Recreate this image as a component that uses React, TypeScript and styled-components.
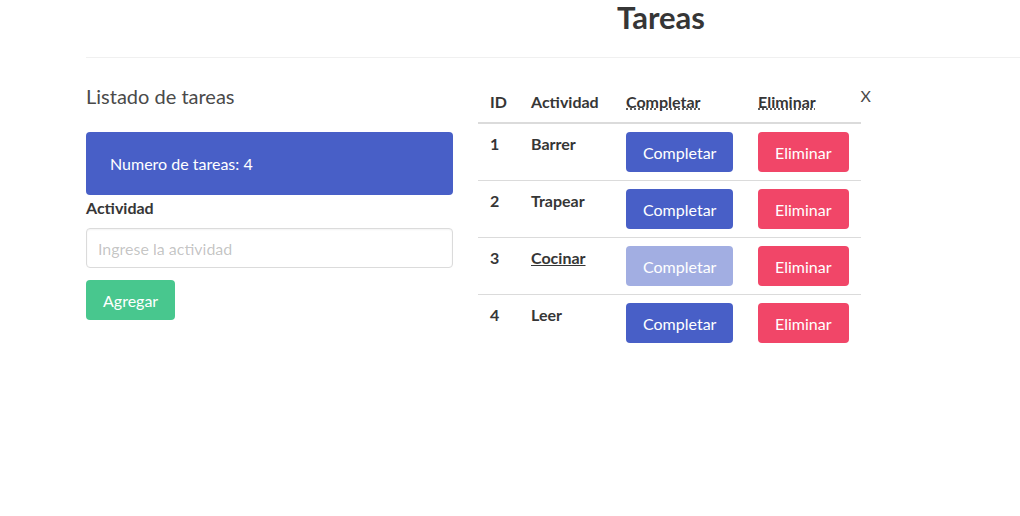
import React, { useState } from 'react';
import styled, { createGlobalStyle } from 'styled-components';

type Task = { id: number; name: string; done: boolean };

const initialTasks: Task[] = [
  { id: 1, name: 'Barrer', done: false },
  { id: 2, name: 'Trapear', done: false },
  { id: 3, name: 'Cocinar', done: true },
  { id: 4, name: 'Leer', done: false },
];

const App = () => {
  const [tasks, setTasks] = useState<Task[]>(initialTasks);
  const [activity, setActivity] = useState('');

  const addTask = () => {
    if (!activity.trim()) return;
    setTasks((prev) => [...prev, { id: prev.length + 1, name: activity, done: false }]);
    setActivity('');
  };

  const completeTask = (id: number) => {
    setTasks((prev) => prev.map((t) => (t.id === id ? { ...t, done: true } : t)));
  };

  const removeTask = (id: number) => {
    setTasks((prev) => prev.filter((t) => t.id !== id));
  };

  return (
    <>
      <GlobalStyle />
      <Header>
        <Title>Tareas</Title>
      </Header>
      <Columns>
        <LeftColumn>
          <Subtitle>Listado de tareas</Subtitle>
          <Notification>Numero de tareas: {tasks.length}</Notification>
          <Label>Actividad</Label>
          <Input
            placeholder="Ingrese la actividad"
            value={activity}
            onChange={(e) => setActivity(e.target.value)}
          />
          <Button $color="#48c78e" onClick={addTask}>
            Agregar
          </Button>
        </LeftColumn>
        <RightColumn>
          <Table>
            <thead>
              <tr>
                <Th $width={41}>ID</Th>
                <Th $width={95}>Actividad</Th>
                <Th $width={132}>
                  <abbr title="Completar">Completar</abbr>
                </Th>
                <Th $width={114}>
                  <abbr title="Eliminar">Eliminar</abbr>
                </Th>
              </tr>
            </thead>
            <tbody>
              {tasks.map((t) => (
                <tr key={t.id}>
                  <Td>{t.id}</Td>
                  <Td $done={t.done}>{t.name}</Td>
                  <Td>
                    <Button $color="#485fc7" disabled={t.done} onClick={() => completeTask(t.id)}>
                      Completar
                    </Button>
                  </Td>
                  <Td>
                    <Button $color="#f14668" onClick={() => removeTask(t.id)}>
                      Eliminar
                    </Button>
                  </Td>
                </tr>
              ))}
            </tbody>
          </Table>
          <Close>X</Close>
        </RightColumn>
      </Columns>
    </>
  );
};

export default App;

const GlobalStyle = createGlobalStyle`
  html, body {
    margin: 0;
    padding: 0;
    background: #fff;
  }
  body {
    font-family: Lato, "Open Sans", Arial, sans-serif;
    font-size: 16px;
    line-height: 1.5;
    color: #4a4a4a;
  }
  * {
    box-sizing: border-box;
  }
`;

const Header = styled.div`
  margin-left: 86px;
  border-bottom: 1px solid #f0f0f0;
  padding-bottom: 22px;
`;

const Title = styled.h1`
  margin: 0;
  padding-left: 216px;
  text-align: center;
  font-size: 31px;
  font-weight: 700;
  line-height: 35px;
  color: #363636;
`;

const Columns = styled.div`
  display: flex;
  padding: 24px 0 0 86px;
  gap: 25px;
`;

const LeftColumn = styled.div`
  width: 367px;
  display: flex;
  flex-direction: column;
  align-items: flex-start;
`;

const Subtitle = styled.h2`
  margin: 0 0 22px;
  font-size: 20px;
  font-weight: 400;
  line-height: 28px;
  color: #4a4a4a;
`;

const Notification = styled.div`
  width: 100%;
  background: #485fc7;
  color: #fff;
  border-radius: 4px;
  padding: 20px 24px 19px;
`;

const Label = styled.label`
  display: block;
  font-weight: 700;
  color: #363636;
  margin: 1px 0 8px;
`;

const Input = styled.input`
  width: 100%;
  height: 40px;
  padding: 0 11px;
  border: 1px solid #dbdbdb;
  border-radius: 4px;
  font: inherit;
  color: #363636;
  margin-bottom: 12px;
  box-shadow: inset 0 1px 2px rgba(10, 10, 10, 0.05);

  &::placeholder {
    color: rgba(54, 54, 54, 0.3);
  }
`;

const Button = styled.button<{ $color: string }>`
  height: 40px;
  padding: 0 16px;
  border: 1px solid transparent;
  border-radius: 4px;
  font-family: inherit;
  font-size: 16px;
  font-weight: 400;
  color: #fff;
  background: ${({ $color }) => $color};
  cursor: pointer;
  white-space: nowrap;

  &:disabled {
    opacity: 0.5;
    cursor: not-allowed;
  }
`;

const RightColumn = styled.div`
  display: flex;
  align-items: flex-start;
`;

const Table = styled.table`
  border-collapse: collapse;
  border-spacing: 0;
  table-layout: fixed;
  color: #363636;

  tbody tr:last-child td {
    border-bottom-width: 0;
  }
`;

const Th = styled.th<{ $width: number }>`
  width: ${({ $width }) => $width}px;
  text-align: left;
  padding: 8px 12px;
  font-weight: 700;
  color: #363636;
  border-bottom: 2px solid #dbdbdb;

  abbr {
    text-decoration: underline dotted;
  }
`;

const Td = styled.td<{ $done?: boolean }>`
  padding: 8px 12px;
  vertical-align: top;
  font-weight: 700;
  border-bottom: 1px solid #dbdbdb;
  text-decoration: ${({ $done }) => ($done ? 'underline' : 'none')};
`;

const Close = styled.span`
  margin-top: 2px;
  color: #4a4a4a;
  line-height: 24px;
`;
